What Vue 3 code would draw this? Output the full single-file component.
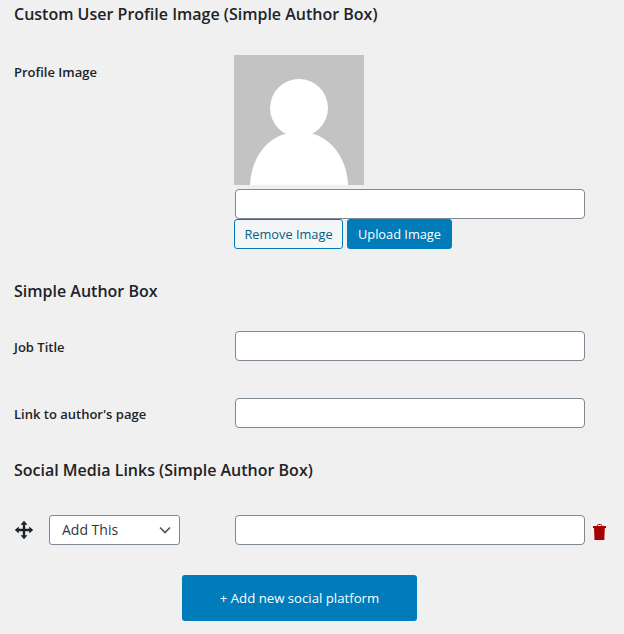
<script setup>
const fields = [
  { label: 'Job Title' },
  { label: "Link to author's page" },
]
</script>

<template>
  <div class="page">
    <h2 class="title first">Custom User Profile Image (Simple Author Box)</h2>
    <div class="row profile">
      <div class="label">Profile Image</div>
      <div class="control">
        <svg class="avatar" viewBox="0 0 130 130" width="130" height="130">
          <rect width="130" height="130" fill="#c3c3c3" />
          <circle cx="65" cy="53" r="29" fill="#fff" />
          <path d="M16 130C17 104 32 83 54 78H76C98 83 113 104 114 130Z" fill="#fff" />
        </svg>
        <input class="text" type="text" />
        <div class="buttons">
          <button class="btn outline">Remove Image</button>
          <button class="btn solid">Upload Image</button>
        </div>
      </div>
    </div>

    <h2 class="title second">Simple Author Box</h2>
    <div class="fields">
      <div v-for="f in fields" :key="f.label" class="row field">
        <div class="label">{{ f.label }}</div>
        <input class="text" type="text" />
      </div>
    </div>

    <h2 class="title third">Social Media Links (Simple Author Box)</h2>
    <div class="social">
      <div class="social-left">
        <svg class="move" viewBox="0 0 20 20" width="20" height="20">
          <path d="M10 .8 13.500 4.800H11.200V8.800H15.200V6.500L19.200 10 15.200 13.500V11.200H11.200V15.200H13.500L10 19.200 6.500 15.200H8.800V11.200H4.800V13.500L.8 10 4.800 6.500V8.800H8.800V4.800H6.500Z" fill="#1d2327" />
        </svg>
        <div class="select">
          <span class="select-value">Add This</span>
          <svg viewBox="0 0 12 8" width="12" height="8">
            <path d="M1 1.500 6 6.500 11 1.500" fill="none" stroke="#50575e" stroke-width="1.700" />
          </svg>
        </div>
      </div>
      <input class="text" type="text" />
      <svg class="trash" viewBox="0 0 13 16" width="13" height="16">
        <path d="M4.500 2V1.300C4.500 .7 5 .5 5.500 .5H7.500C8 .5 8.500 .7 8.500 1.300V2" fill="none" stroke="#a80000" stroke-width="1" />
        <rect y="2" width="13" height="2" fill="#a80000" />
        <path d="M1 4H11.800L11.300 16H1.500Z" fill="#a80000" />
      </svg>
    </div>

    <div class="add-row">
      <button class="add">+ Add new social platform</button>
    </div>
  </div>
</template>

<style scoped>
.page {
  width: 624px;
  height: 634px;
  box-sizing: border-box;
  padding: 0 0 0 14px;
  background: #f0f0f0;
  color: #1d2327;
  font-family: "Open Sans", "Noto Sans", sans-serif;
  font-size: 13px;
  overflow: hidden;
}
.title {
  margin: 0;
  font-size: 16px;
  line-height: 20px;
  font-weight: 600;
  color: #1d2327;
}
.first { padding-top: 4px; }
.second { margin-top: 32px; }
.third { margin-top: 32px; }
.row { display: flex; }
.label {
  width: 220px;
  flex: none;
  font-weight: 600;
  font-size: 13px;
  line-height: 20px;
}
.profile { margin-top: 31px; }
.profile .label { padding-top: 7px; }
.control {
  display: flex;
  flex-direction: column;
  align-items: flex-start;
}
.avatar { display: block; }
.text {
  display: block;
  box-sizing: border-box;
  width: 350px;
  height: 30px;
  margin: 0 0 0 1px;
  padding: 0 8px;
  background: #fff;
  border: 1px solid #7e8993;
  border-radius: 4px;
  flex: none;
}
.control .text { margin-top: 4px; }
.buttons { display: flex; gap: 4px; }
.btn {
  box-sizing: border-box;
  height: 30px;
  padding: 0;
  border-radius: 3px;
  border: 1px solid #007cba;
  font: inherit;
  font-size: 12.800px;
  cursor: pointer;
}
.outline { width: 109px; background: #f3f5f6; color: #016087; }
.solid { width: 105px; background: #007cba; color: #fff; }
.fields { margin-top: 30px; display: flex; flex-direction: column; gap: 37px; }
.field { align-items: center; }
.field .label { padding-top: 2px; }
.social { display: flex; align-items: center; margin-top: 35px; }
.social-left { width: 220px; flex: none; display: flex; align-items: center; gap: 15px; }
.move { display: block; flex: none; }
.select {
  box-sizing: border-box;
  width: 131px;
  height: 30px;
  display: flex;
  align-items: center;
  justify-content: space-between;
  padding: 0 8px 0 12px;
  background: #fff;
  border: 1px solid #7e8993;
  border-radius: 3px;
  color: #32373c;
  font-size: 14px;
}
.select-value { padding-bottom: 2px; }
.trash { margin-left: 8px; margin-top: 4px; flex: none; }
.add-row { margin-top: 30px; padding-left: 168px; }
.add {
  display: block;
  width: 235px;
  height: 46px;
  padding: 0;
  background: #007cba;
  color: #fff;
  border: none;
  border-radius: 3px;
  font: inherit;
  font-size: 13.200px;
  cursor: pointer;
}
</style>
